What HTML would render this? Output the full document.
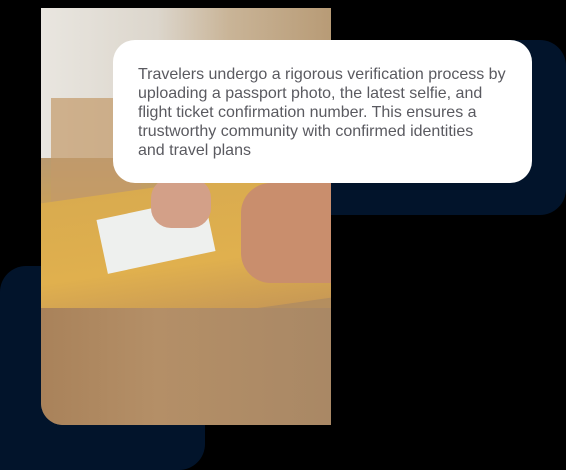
<!DOCTYPE html>
<html><head><style>
html,body{margin:0;padding:0;background:#000;width:566px;height:470px;overflow:hidden;position:relative;font-family:"Liberation Sans",sans-serif}
.navy{position:absolute;background:#02142b}
.photo{position:absolute;left:41px;top:8px;width:290px;height:417px;border-radius:0 0 0 22px;overflow:hidden;
background:linear-gradient(180deg,#ddd8cf 0%,#cfc2ad 20%,#b89a72 35%,#c9a05a 48%,#d9a848 60%,#b58e5e 68%,#a98a68 100%)}
.photo div{position:absolute}
.box{position:absolute;left:113px;top:40px;width:419px;height:143px;background:#fff;border-radius:22px}
.txt{position:absolute;left:138px;top:65px;width:400px;white-space:nowrap;font-size:16px;line-height:19px;color:#5a5a60}
</style></head><body>
<div class="navy" style="left:328px;top:40px;width:238px;height:175px;border-radius:0 26px 26px 0"></div>
<div class="navy" style="left:0;top:266px;width:205px;height:204px;border-radius:26px 0 26px 0"></div>
<div class="photo">
  <div style="left:0;top:0;width:290px;height:150px;background:linear-gradient(90deg,#e9e6e0 0%,#dcd6cc 40%,#c9b497 65%,#b89b76 100%)"></div>
  <div style="left:10px;top:90px;width:90px;height:110px;background:#c39a6a;opacity:.7"></div>
  <div style="left:0;top:175px;width:290px;height:135px;background:linear-gradient(180deg,#d9ab4f,#e0b04e 60%,#c99a55);transform:skewY(-8deg)"></div>
  <div style="left:60px;top:200px;width:110px;height:55px;background:#eef0ee;transform:rotate(-12deg)"></div>
  <div style="left:110px;top:170px;width:60px;height:50px;background:#d3a088;border-radius:20px"></div>
  <div style="left:200px;top:175px;width:90px;height:100px;background:#c98e6d;border-radius:30px 0 0 30px"></div>
  <div style="left:0;top:300px;width:290px;height:117px;background:linear-gradient(90deg,#a9825a,#b48f67 40%,#a98865)"></div>
</div>
<div class="box"></div>
<div class="txt">Travelers undergo a rigorous verification process by<br>uploading a passport photo, the latest selfie, and<br>flight ticket confirmation number. This ensures a<br>trustworthy community with confirmed identities<br>and travel plans</div>
</body></html>
